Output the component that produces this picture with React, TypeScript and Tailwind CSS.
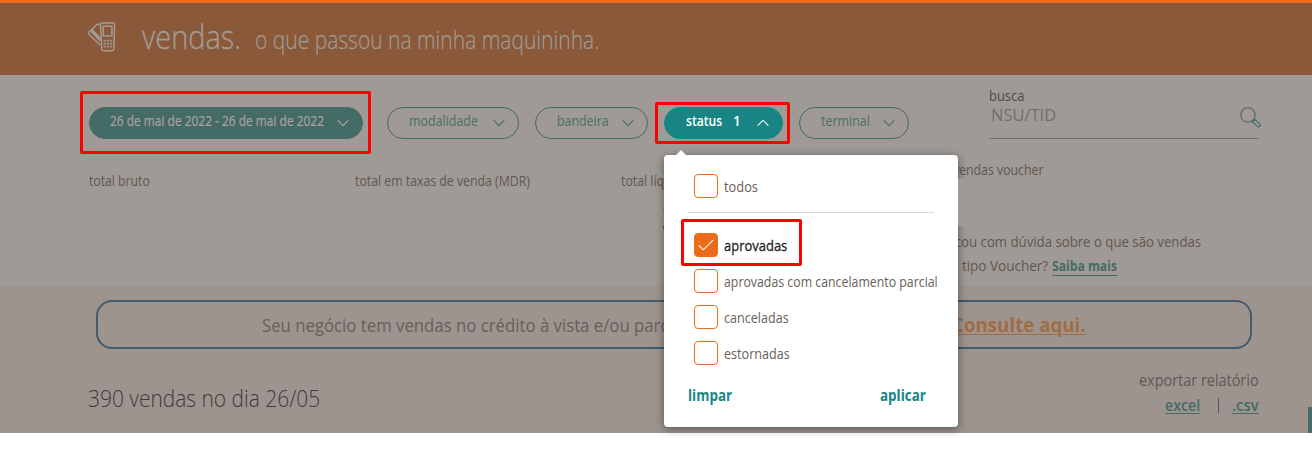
import React from "react";

type TextProps = { className?: string; children: React.ReactNode };

function T({ className = "", children }: TextProps) {
  return (
    <span className={`inline-block shrink-0 origin-left whitespace-nowrap ${className}`}>{children}</span>
  );
}

function Chevron({ up = false, className = "" }: { up?: boolean; className?: string }) {
  return (
    <svg
      viewBox="0 0 12 8"
      className={`h-2 w-3 shrink-0 fill-none stroke-current ${className}`}
      strokeWidth="1.1"
    >
      <path d={up ? "M.6 6.6 6 1.2l5.4 5.4" : "M.6 1.2 6 6.6l5.4-5.4"} />
    </svg>
  );
}

function Pill({ className, children, up }: { className: string; children: React.ReactNode; up?: boolean }) {
  return (
    <button
      className={`flex h-8 shrink-0 items-start justify-between rounded-full border pt-0.5 pr-[13px] text-left text-[15px] leading-5 ${className}`}
    >
      <span className="w-0 grow">{children}</span>
      <Chevron up={up} className="mt-[9px]" />
    </button>
  );
}

function CardMachineIcon() {
  return (
    <svg viewBox="0 0 28 30" className="h-[30px] w-7 fill-none stroke-current" strokeWidth="1.5">
      <path d="M13.8 1H25q1.6 0 1.6 1.6L25.8 27q-.1 1.7-1.6 1.7h-8.8q-1.5 0-1.6-1.7L12.5 2.6Q12.5 1 13.8 1Z" />
      <path d="M15.3 4.3h8.6v9.6h-8.6z" />
      <path d="M15.5 18.6h2.2m1 0h2.2m1 0h2.2m-8.5 3h2.1m1 0h2.2m1 0h2.1m-8.3 3h2.1m1 0h2.1m1 0h2" strokeWidth="1.8" />
      <path d="M11.6 2.2H9.4L.9 10v2.2L12.2 23" />
      <path d="m3.6 8.4 9 9.8" strokeWidth="3.4" />
    </svg>
  );
}

function SearchIcon() {
  return (
    <svg viewBox="0 0 21 21" className="h-[21px] w-[21px] fill-none stroke-[#48676b]" strokeWidth="1.1">
      <circle cx="8" cy="8" r="7.2" />
      <path d="m13.1 13.1.9.9m-1.5 1.2 2.7-2.7 5 5.2q.5.7-.3 1.6-1 1-1.8.4Z" />
    </svg>
  );
}

function Option({ label, className, checked = false }: { label: string; className: string; checked?: boolean }) {
  return (
    <label className="flex h-6 items-center gap-[6px]">
      <span
        className={`flex h-6 w-6 shrink-0 items-center justify-center rounded border border-[#ec7019] ${checked ? "bg-[#ec6b1a]" : "bg-white"}`}
      >
        {checked && (
          <svg viewBox="0 0 16 12" className="h-3 w-4 fill-none stroke-white" strokeWidth="1.1">
            <path d="m.7 6.2 4.6 4.6L15.3.8" />
          </svg>
        )}
      </span>
      <T className={`-mt-px text-[15px] leading-5 ${className}`}>{label}</T>
    </label>
  );
}

function StatusMenu() {
  return (
    <div className="absolute top-[155px] left-[664px] flex h-[272px] w-[294px] flex-col rounded bg-white px-6 pt-[19px] shadow-[0_2px_10px_rgba(0,0,0,0.45)]">
      <svg viewBox="0 0 10 5" className="absolute -top-[5px] left-3 h-[5px] w-[10px] fill-white">
        <path d="M0 5 5 0l5 5Z" />
      </svg>
      <div className="border-b border-[#dadada] pb-[14px] pl-[6px]">
        <Option label="todos" className="scale-x-[0.855] text-[#696158]" />
      </div>
      <div className="flex flex-col gap-3 pt-5 pl-[6px]">
        <Option label="aprovadas" checked className="scale-x-[0.865] text-[#222] [-webkit-text-stroke:0.3px_#222]" />
        <Option label="aprovadas com cancelamento parcial" className="scale-x-[0.822] text-[#696158]" />
        <Option label="canceladas" className="scale-x-[0.84] text-[#696158]" />
        <Option label="estornadas" className="scale-x-[0.84] text-[#696158]" />
      </div>
      <div className="mt-[18px] flex justify-between pr-2 text-base leading-6 font-bold text-[#188684]">
        <T className="scale-x-[0.84]">limpar</T>
        <T className="w-[46px] scale-x-[0.84]">aplicar</T>
      </div>
    </div>
  );
}

function Header() {
  return (
    <header className="flex h-[75px] shrink-0 border-t-[3px] border-[#ee6b1b] bg-[#8a5939] pl-[88px] text-[#a39b94]">
      <div className="w-[54px] pt-[19px]">
        <CardMachineIcon />
      </div>
      <div className="w-[113px] pt-[14px] text-[33px] leading-10 font-light">
        <T className="scale-x-[0.876] [-webkit-text-stroke:0.3px_#a39b94]">vendas.</T>
      </div>
      <div className="pt-4 text-[26px] leading-10 font-light">
        <T className="scale-x-[0.808] [-webkit-text-stroke:0.2px_#a39b94]">o que passou na minha maquininha.</T>
      </div>
    </header>
  );
}

function Filters() {
  return (
    <div className="flex h-16 shrink-0 pl-[89px]">
      <div className="flex gap-4 pt-8">
        <Pill className="mr-2 w-[274px] border-[#456b67] bg-[#456b67] pl-5 text-[#aaa59f]">
          <T className="scale-x-[0.795] [-webkit-text-stroke:0.2px_#aaa59f]">26 de mai de 2022 - 26 de mai de 2022</T>
        </Pill>
        <Pill className="w-[132px] border-[#456b67] pl-[21px] text-[#4c6d69]">
          <T className="scale-x-[0.83]">modalidade</T>
        </Pill>
        <Pill className="w-[113px] border-[#456b67] pl-[21px] text-[#4c6d69]">
          <T className="scale-x-[0.825]">bandeira</T>
        </Pill>
        <Pill up className="w-[119px] border-[#188484] bg-[#188484] pl-[21px] font-semibold text-white">
          <span className="flex">
            <T className="w-[47px] scale-x-[0.81]">status</T>
            <T className="scale-x-[0.9]">1</T>
          </span>
        </Pill>
        <Pill className="w-[110px] border-[#456b67] pl-[21px] text-[#4c6d69]">
          <T className="scale-x-[0.83]">terminal</T>
        </Pill>
      </div>
      <div className="ml-20 flex w-[270px] shrink-0 justify-between border-b border-[#736c67] pt-[10px]">
        <div className="flex flex-col items-start">
          <T className="scale-x-[0.86] text-[15px] leading-5 text-[#504a46]">busca</T>
          <T className="ml-0.5 scale-x-[0.97] text-[17px] leading-5 text-[#756e69]">NSU/TID</T>
        </div>
        <div className="-mr-0.5 pt-[22px]">
          <SearchIcon />
        </div>
      </div>
    </div>
  );
}

function Totals() {
  return (
    <div className="flex h-[147px] shrink-0 pl-[88px] text-[15px] leading-5 text-[#5f5752]">
      <div className="w-[266px] pt-[31px]">
        <T className="ml-px scale-x-[0.815]">total bruto</T>
      </div>
      <div className="w-[266px] pt-[31px]">
        <T className="ml-px scale-x-[0.82]">total em taxas de venda (MDR)</T>
      </div>
      <div className="w-[331px] pt-[31px]">
        <T className="ml-px scale-x-[0.82]">total líquido</T>
      </div>
      <div className="flex flex-col items-start pt-5">
        <T className="ml-0.5 scale-x-[0.82]">vendas voucher</T>
        <div className="-ml-[4px] pt-[50px] leading-6">
          <p>
            <T className="scale-x-[0.88]">ficou com dúvida sobre o que são vendas</T>
          </p>
          <p className="-ml-[5px] flex">
            <T className="w-[110px] scale-x-[0.9]">do tipo Voucher?</T>
            <a className="mt-[2px] h-[21px] w-[65px] border-b border-[#456b67] leading-5 font-bold text-[#456b67]">
              <T className="scale-x-[0.81]">Saiba mais</T>
            </a>
          </p>
        </div>
      </div>
    </div>
  );
}

function Results() {
  return (
    <div className="flex grow flex-col bg-[#9d9490] pt-[14px] pr-[53px] pl-[88px]">
      <div className="mx-2 flex h-[49px] w-[1156px] shrink-0 rounded-2xl border-2 border-[#455b69] pt-[9px] pl-[164px] text-[19px] leading-7 text-[#666059]">
        <div className="w-[690px]">
          <T className="scale-x-[0.882]">Seu negócio tem vendas no crédito à vista e/ou parcelado?</T>
        </div>
        <T className="scale-x-[0.985] font-bold text-[#a16c42] underline decoration-1 underline-offset-2">Consulte aqui.</T>
      </div>
      <div className="flex justify-between">
        <div className="pt-[33px] text-2xl leading-8 font-light text-[#3f3a38]">
          <T className="scale-x-[0.872]">390 vendas no dia 26/05</T>
        </div>
        <div className="w-[120px] pt-[19px] text-base leading-6 text-[#605753]">
          <T className="scale-x-[0.902]">exportar relatório</T>
          <div className="flex pt-px pl-[26px] font-semibold text-[#456b67]">
            <T className="w-[53px] scale-x-[0.885]">
              <span className="underline decoration-1 underline-offset-2">excel</span>
            </T>
            <span className="mt-[5px] mr-[13px] h-[15px] w-px shrink-0 bg-[#4d5a6b]" />
            <T className="scale-x-[0.93] underline decoration-1 underline-offset-2">.csv</T>
          </div>
        </div>
      </div>
    </div>
  );
}

export default function App() {
  return (
    <div className="h-[460px] w-[1312px] overflow-hidden bg-white font-['Open_Sans','Noto_Sans',sans-serif]">
      <div className="relative flex h-[433px] flex-col bg-[#9f9a95]">
        <Header />
        <Filters />
        <Totals />
        <Results />
        <StatusMenu />
        <div className="absolute top-[179px] left-[958px] h-[47px] w-3 bg-[#9f9a95]" />
        <div className="absolute top-[209px] left-[663px] h-px w-px bg-[#7a4a30]" />
        <div className="absolute top-[226px] left-[663px] h-[3px] w-px bg-[#4a4340]" />
        <div className="absolute right-0 bottom-0 h-[26px] w-1 bg-[#456b67]" />
        <div className="absolute top-[91px] left-[80px] h-[63px] w-[291px] rounded-xs border-3 border-[#ff0000]" />
        <div className="absolute top-[102px] left-[655px] h-[42px] w-[135px] rounded-xs border-3 border-[#ff0000]" />
        <div className="absolute top-[219px] left-[681px] h-[47px] w-[121px] rounded-xs border-3 border-[#ff0000]" />
      </div>
    </div>
  );
}
